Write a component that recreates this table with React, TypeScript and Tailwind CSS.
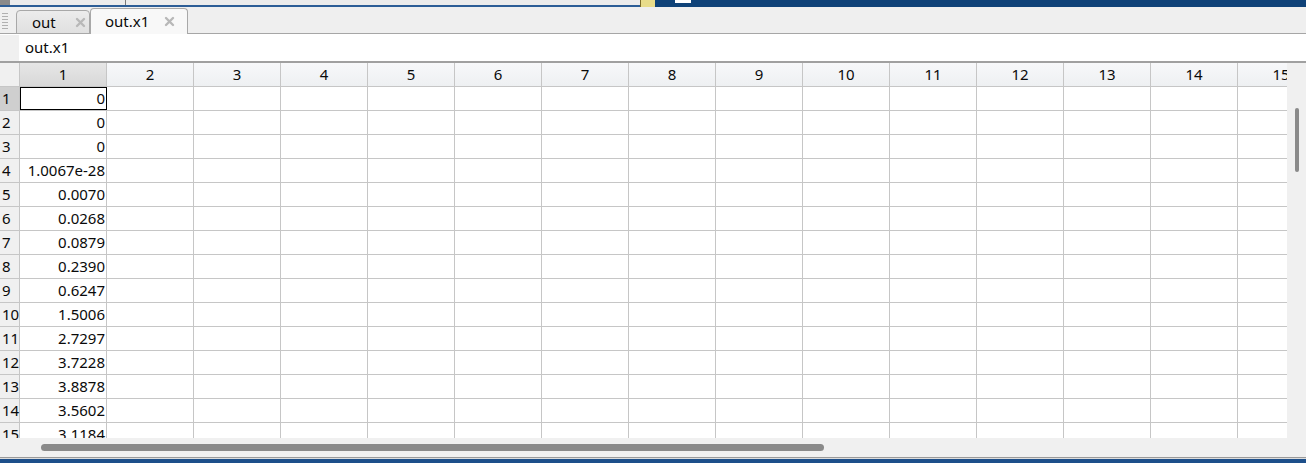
import React from "react";

const values = [
  "0", "0", "0", "1.0067e-28", "0.0070", "0.0268", "0.0879", "0.2390",
  "0.6247", "1.5006", "2.7297", "3.7228", "3.8878", "3.5602", "3.1184",
];

const cols = Array.from({ length: 15 }, (_, i) => i + 1);

const CloseX = () => (
  <svg width="11" height="11" viewBox="0 0 11 11" className="shrink-0">
    <path d="M2 2 L9 9 M9 2 L2 9" stroke="#b8b8b8" strokeWidth="2.4" strokeLinecap="round" />
  </svg>
);

export default function App() {
  return (
    <div
      className="w-[1306px] h-[463px] overflow-hidden bg-[#f0f0f0] flex flex-col text-[15px] text-[#0a0a0a]"
      style={{ fontFamily: '"Noto Sans", "Open Sans", sans-serif' }}
    >
      {/* top strip */}
      <div className="h-[7px] flex shrink-0">
        <div className="w-[640px] flex flex-col">
          <div className="flex-1 bg-[#ececec] flex">
            <div className="w-[10px] bg-[#8a8a8a]" />
            <div className="w-[116px] border-r border-[#7a7a7a]" />
          </div>
          <div className="h-[2px] bg-[#2c5d96]" />
        </div>
        <div className="w-[15px] bg-[#e8dc8a] border-l border-[#7a6a2a]" />
        <div className="flex-1 bg-[#0f4278] flex items-start">
          <div className="ml-[20px] w-[16px] h-[3px] bg-white" />
        </div>
      </div>

      {/* tab bar */}
      <div className="h-[27px] shrink-0 flex items-end border-b border-[#a6a6a6] bg-[#efefef]">
        <div className="w-[14px] self-stretch flex flex-col gap-[2px] pt-[6px] pl-[2px]">
          {Array.from({ length: 6 }).map((_, i) => (
            <div key={i} className="w-[6px] h-[1px] bg-[#b0b0b0]" />
          ))}
        </div>
        <div className="ml-[2px] w-[74px] h-[24px] mb-[-1px] rounded-t-[4px] border border-[#a8a8a8] bg-gradient-to-b from-[#ececec] to-[#e0e0e0] flex items-center pl-[15px] pr-[3px] justify-between">
          <span className="leading-none">out</span>
          <CloseX />
        </div>
        <div className="w-[98px] h-[26px] mb-[-1px] rounded-t-[4px] border border-b-0 border-[#a8a8a8] bg-[#f8f8f8] flex items-center pl-[14px] pr-[12px] justify-between">
          <span className="leading-none">out.x1</span>
          <CloseX />
        </div>
      </div>

      {/* address row */}
      <div className="h-[29px] shrink-0 bg-white flex items-center border-b-2 border-[#a0a0a0]">
        <div className="w-[19px] h-[26px] bg-[#f0f0f0]" />
        <span className="ml-[6px]">out.x1</span>
      </div>

      {/* grid + vertical scroll */}
      <div className="flex h-[375px] shrink-0">
        <div className="w-[1287px] overflow-hidden bg-white">
          {/* header row */}
          <div className="flex h-[24px] bg-gradient-to-b from-[#f7f8fa] to-[#eef0f2] border-b border-[#c6c6c6]">
            <div className="w-[20px] shrink-0 border-r border-[#c6c6c6] bg-[#f0f0f0]" />
            {cols.map((c) => (
              <div
                key={c}
                className={
                  "w-[87px] shrink-0 border-r border-[#c6c6c6] flex items-center justify-center " +
                  (c === 1 ? "bg-gradient-to-b from-[#e6e6e6] to-[#d8d8d8]" : "")
                }
              >
                {c}
              </div>
            ))}
          </div>
          {values.map((v, r) => (
            <div key={r} className="flex h-[24px] border-b border-[#c6c6c6]">
              <div
                className={
                  "w-[20px] shrink-0 border-r border-[#c6c6c6] flex items-center pl-[2px] " +
                  (r === 0 ? "bg-[#cfcfcf]" : "bg-[#f0f0f0]")
                }
              >
                {r + 1}
              </div>
              {cols.map((c) => (
                <div
                  key={c}
                  className={
                    "w-[87px] shrink-0 flex items-center justify-end pr-[1px] " +
                    (c === 1 && r === 0
                      ? "border border-black"
                      : "border-r border-[#c6c6c6]")
                  }
                >
                  {c === 1 ? v : ""}
                </div>
              ))}
            </div>
          ))}
        </div>
        <div className="flex-1 bg-[#f0f0f0] flex justify-center pt-[45px]">
          <div className="w-[4px] h-[64px] rounded-full bg-[#8a8a8a]" />
        </div>
      </div>

      {/* horizontal scroll */}
      <div className="h-[19px] shrink-0 bg-[#f0f0f0] flex items-center pl-[41px]">
        <div className="w-[783px] h-[7px] rounded-full bg-[#8a8a8a]" />
      </div>
      <div className="h-[1px] shrink-0 bg-[#9a9a9a]" />
      <div className="h-[1px] shrink-0 bg-[#dcdcdc]" />
      <div className="flex-1 bg-[#1d4f8a]" />
    </div>
  );
}
